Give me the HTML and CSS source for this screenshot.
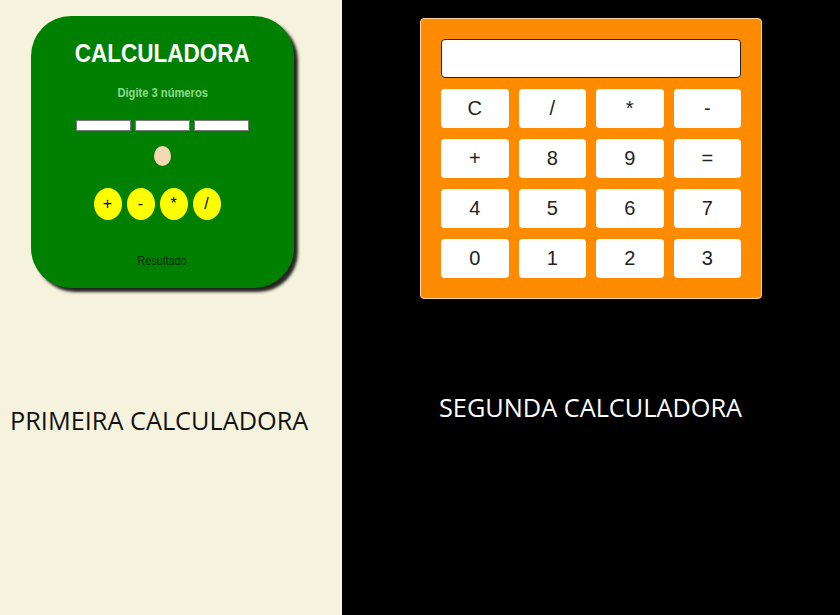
FILE: index.html
```html
<!DOCTYPE html>
<html lang="pt">
<head>
<meta charset="utf-8">
<title>Calculadoras</title>
<link rel="stylesheet" href="styles.css">
</head>
<body>
<div class="page">
  <section class="pane pane-left">
    <div class="green-calc">
      <h1 class="green-title">CALCULADORA</h1>
      <p class="green-sub">Digite 3 números</p>
      <div class="green-inputs">
        <input class="green-input" type="text">
        <input class="green-input" type="text">
        <input class="green-input" type="text">
      </div>
      <div class="green-dot"></div>
      <div class="green-ops">
        <button class="green-op">+</button>
        <button class="green-op">-</button>
        <button class="green-op">*</button>
        <button class="green-op">/</button>
      </div>
      <p class="green-result">Resultado</p>
    </div>
    <p class="label label-left">PRIMEIRA CALCULADORA</p>
  </section>
  <section class="pane pane-right">
    <div class="orange-calc">
      <div class="display"></div>
      <div class="keys">
        <button class="key">C</button>
        <button class="key">/</button>
        <button class="key">*</button>
        <button class="key">-</button>
        <button class="key">+</button>
        <button class="key">8</button>
        <button class="key">9</button>
        <button class="key">=</button>
        <button class="key">4</button>
        <button class="key">5</button>
        <button class="key">6</button>
        <button class="key">7</button>
        <button class="key">0</button>
        <button class="key">1</button>
        <button class="key">2</button>
        <button class="key">3</button>
      </div>
    </div>
    <p class="label label-right">SEGUNDA CALCULADORA</p>
  </section>
</div>
</body>
</html>
```
FILE: styles.css
```css
html, body {
  margin: 0;
  padding: 0;
  height: 100%;
  background: #000;
}
.page {
  display: flex;
  height: 615px;
  width: 840px;
}
.pane-left {
  width: 342px;
  background: #f5f3dd;
  padding-top: 16px;
  box-sizing: border-box;
}
.pane-right {
  flex: 1;
  background: #000;
  padding-top: 18px;
  padding-left: 78px;
  box-sizing: border-box;
}
.green-calc {
  margin-left: 31px;
  width: 263px;
  height: 272px;
  box-sizing: border-box;
  background: #008000;
  border-radius: 40px;
  box-shadow: 4px 4px 3px rgba(0, 0, 0, 0.85);
  display: flex;
  flex-direction: column;
  align-items: center;
  padding-top: 23px;
  font-family: "Liberation Sans", Arial, sans-serif;
}
.green-title {
  margin: 0;
  font-size: 25px;
  line-height: 29px;
  font-weight: bold;
  color: #fff;
  transform: scaleX(0.9);
}
.green-sub {
  margin: 18px 0 0;
  font-size: 12px;
  line-height: 14px;
  font-weight: bold;
  color: #8fd88f;
  transform: scaleX(0.93);
}
.green-inputs {
  margin-top: 20px;
  display: flex;
  gap: 4px;
}
.green-input {
  width: 55px;
  height: 11px;
  box-sizing: border-box;
  border: 1px solid #7a7a7a;
  background: #fff;
  padding: 0;
  margin: 0;
}
.green-dot {
  margin-top: 15px;
  width: 17px;
  height: 20px;
  border-radius: 50%;
  background: #f3d9b1;
}
.green-ops {
  margin-top: 22px;
  display: flex;
  gap: 5px;
  padding-right: 11px;
}
.green-op {
  width: 28px;
  height: 32px;
  border: none;
  border-radius: 50%;
  background: #ffff00;
  color: #000;
  font-family: "Liberation Sans", Arial, sans-serif;
  font-size: 16px;
  padding: 0;
}
.green-result {
  margin: 34px 0 0;
  font-size: 12px;
  line-height: 14px;
  color: #0b2e0b;
  transform: scaleX(0.92);
}
.label {
  margin: 0;
  font-family: "Open Sans", sans-serif;
  font-size: 25.3px;
  line-height: 33px;
}
.label-left {
  margin-top: 116px;
  padding-left: 10px;
  color: #111;
}
.label-right {
  margin-top: 92px;
  padding-left: 19px;
  color: #fff;
}
.orange-calc {
  width: 342px;
  box-sizing: border-box;
  background: #ff8c00;
  border: 1px solid #ffd49a;
  border-radius: 4px;
  padding: 20px;
}
.display {
  height: 39px;
  box-sizing: border-box;
  background: #fff;
  border: 1px solid #222;
  border-radius: 4px;
}
.keys {
  margin-top: 11px;
  display: grid;
  grid-template-columns: repeat(4, 1fr);
  column-gap: 10px;
  row-gap: 11px;
}
.key {
  height: 39px;
  border: none;
  border-radius: 4px;
  background: #fff;
  color: #222;
  font-family: "Liberation Sans", Arial, sans-serif;
  font-size: 20px;
  padding: 0;
}
```
